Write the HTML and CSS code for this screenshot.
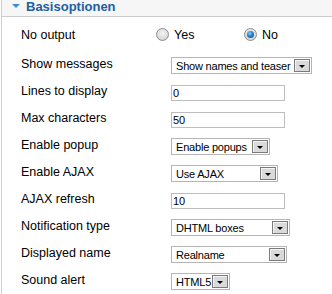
FILE: index.html
```html
<!DOCTYPE html>
<html lang="de">
<head>
    <meta charset="UTF-8">
    <meta name="viewport" content="width=device-width, initial-scale=1.0">
    <title>Basisoptionen</title>
    <link rel="stylesheet" href="styles.css">
</head>
<body>
    <div class="panel">
        <h3 class="panel-title"><span class="toggle"></span>Basisoptionen</h3>

        <div class="options">
            <div class="row row-radio">
                <span class="label">No output</span>
                <div class="radios">
                    <label class="radio"><span class="radio-dot"></span>Yes</label>
                    <label class="radio checked"><span class="radio-dot"></span>No</label>
                </div>
            </div>

            <div class="row">
                <span class="label">Show messages</span>
                <div class="select sel-messages"><span class="select-text">Show names and teaser</span><span class="select-arrow"></span></div>
            </div>

            <div class="row">
                <span class="label">Lines to display</span>
                <div class="input">0</div>
            </div>

            <div class="row">
                <span class="label">Max characters</span>
                <div class="input">50</div>
            </div>

            <div class="row">
                <span class="label">Enable popup</span>
                <div class="select sel-popup"><span class="select-text">Enable popups</span><span class="select-arrow"></span></div>
            </div>

            <div class="row">
                <span class="label">Enable AJAX</span>
                <div class="select sel-ajax"><span class="select-text">Use AJAX</span><span class="select-arrow"></span></div>
            </div>

            <div class="row">
                <span class="label">AJAX refresh</span>
                <div class="input">10</div>
            </div>

            <div class="row">
                <span class="label">Notification type</span>
                <div class="select sel-notify"><span class="select-text">DHTML boxes</span><span class="select-arrow"></span></div>
            </div>

            <div class="row">
                <span class="label">Displayed name</span>
                <div class="select sel-name"><span class="select-text">Realname</span><span class="select-arrow"></span></div>
            </div>

            <div class="row">
                <span class="label">Sound alert</span>
                <div class="select sel-sound"><span class="select-text">HTML5</span><span class="select-arrow"></span></div>
            </div>
        </div>
    </div>
</body>
</html>
```

FILE: styles.css
```css
* {
    margin: 0;
    padding: 0;
    box-sizing: border-box;
}

body {
    font-family: 'Liberation Sans', Arial, sans-serif;
    color: #000;
    background-color: #fff;
}

.panel {
    margin-left: 1px;
    border-left: 1px solid #cfcfcf;
    min-height: 294px;
}

.panel-title {
    height: 17px;
    background-color: #f6f6f6;
    border-bottom: 1px solid #cccccc;
    font-size: 13px;
    line-height: 13px;
    font-weight: bold;
    color: #1c5fa3;
    display: flex;
    align-items: flex-start;
}

.toggle {
    width: 0;
    height: 0;
    margin: 4px 6px 0 10px;
    border-left: 4px solid transparent;
    border-right: 4px solid transparent;
    border-top: 4px solid #3b8ed3;
}

.options {
    padding-left: 19px;
}

.row {
    display: flex;
    align-items: center;
    height: 27px;
}

.row-radio {
    height: 35px;
}

.label {
    width: 150px;
    font-size: 12.5px;
    margin-bottom: 4px;
}

.row-radio .label {
    margin-bottom: 0;
}

/* radio buttons */
.radios {
    display: flex;
}

.radio {
    width: 88px;
    display: flex;
    align-items: center;
    gap: 5px;
    font-size: 12.5px;
}

.radio-dot {
    width: 13px;
    height: 13px;
    border-radius: 50%;
    border: 1px solid #8e8e8e;
    background: radial-gradient(circle at 50% 40%, #f4f4f4 0%, #dcdcdc 60%, #c4c4c4 100%);
    display: flex;
    align-items: center;
    justify-content: center;
}

.radio.checked .radio-dot::after {
    content: '';
    width: 7px;
    height: 7px;
    border-radius: 50%;
    background: radial-gradient(circle at 40% 35%, #8fd0ff 0%, #2a86d6 40%, #0c3f78 100%);
}

/* text inputs */
.input {
    width: 114px;
    height: 16px;
    border: 1px solid #bdbdbd;
    padding-left: 1px;
    font-size: 11px;
    line-height: 14px;
}

/* select boxes */
.select {
    height: 17px;
    border: 1px solid #b5b5b5;
    display: flex;
    align-items: center;
    padding: 0 1px 0 4px;
    font-size: 11px;
}

.select-text {
    flex: 1;
    white-space: nowrap;
    letter-spacing: -0.2px;
}

.select-arrow {
    width: 16px;
    height: 13px;
    border: 1px solid #7b7b7b;
    background-color: #dadada;
    box-shadow: inset 1px 1px 0 #f4f4f4;
    display: flex;
    justify-content: center;
    align-items: flex-end;
    padding-bottom: 3px;
}

.select-arrow::after {
    content: '';
    width: 0;
    height: 0;
    border-left: 3px solid transparent;
    border-right: 3px solid transparent;
    border-top: 3px solid #000;
}

.sel-messages {
    width: 141px;
}

.sel-popup {
    width: 99px;
}

.sel-ajax {
    width: 107px;
}

.sel-notify {
    width: 119px;
}

.sel-name {
    width: 116px;
}

.sel-sound {
    width: 59px;
}
```
